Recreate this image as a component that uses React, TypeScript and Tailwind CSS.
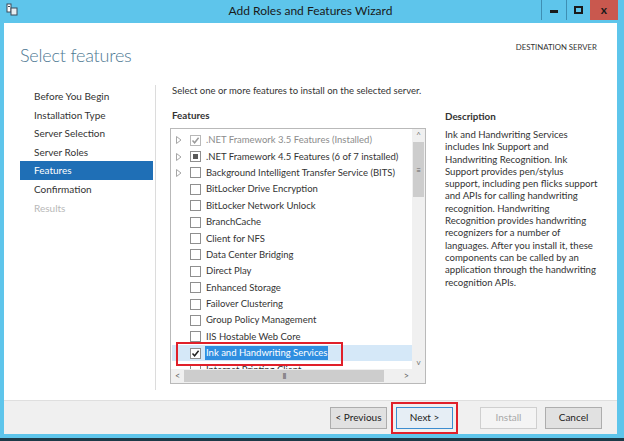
import React from 'react';

const navItems = [
  'Before You Begin',
  'Installation Type',
  'Server Selection',
  'Server Roles',
  'Features',
  'Confirmation',
  'Results',
];

type Row = { label: string; state: 'none' | 'checked' | 'partial' | 'installed'; expand?: boolean };

const rows: Row[] = [
  { label: '.NET Framework 3.5 Features (Installed)', state: 'installed', expand: true },
  { label: '.NET Framework 4.5 Features (6 of 7 installed)', state: 'partial', expand: true },
  { label: 'Background Intelligent Transfer Service (BITS)', state: 'none', expand: true },
  { label: 'BitLocker Drive Encryption', state: 'none' },
  { label: 'BitLocker Network Unlock', state: 'none' },
  { label: 'BranchCache', state: 'none' },
  { label: 'Client for NFS', state: 'none' },
  { label: 'Data Center Bridging', state: 'none' },
  { label: 'Direct Play', state: 'none' },
  { label: 'Enhanced Storage', state: 'none' },
  { label: 'Failover Clustering', state: 'none' },
  { label: 'Group Policy Management', state: 'none' },
  { label: 'IIS Hostable Web Core', state: 'none' },
  { label: 'Ink and Handwriting Services', state: 'checked' },
  { label: 'Internet Printing Client', state: 'none' },
];

function CheckBox({ state }: { state: Row['state'] }) {
  const border = state === 'installed' ? 'border-[#b8b8b8]' : 'border-[#8f8f8f]';
  return (
    <div className={`w-[11px] h-[11px] border ${border} bg-white flex items-center justify-center shrink-0`}>
      {state === 'partial' && <div className="w-[5px] h-[5px] bg-[#5a5a5a]" />}
      {(state === 'checked' || state === 'installed') && (
        <svg width="9" height="9" viewBox="0 0 9 9">
          <path d="M1.5 4.5 L3.6 6.8 L7.6 1.8" fill="none" stroke={state === 'installed' ? '#9a9a9a' : '#222'} strokeWidth="1.5" />
        </svg>
      )}
    </div>
  );
}

function Button({ label, disabled, focused }: { label: string; disabled?: boolean; focused?: boolean }) {
  return (
    <div
      className={`w-[57px] h-[22px] flex items-center justify-center text-[10px] border shrink-0 ${
        disabled
          ? 'border-[#cfcfcf] bg-[#f4f4f4] text-[#a8a8a8]'
          : focused
          ? 'border-[#3c8dd0] bg-[#e6eef5] text-[#222]'
          : 'border-[#adadad] bg-[#e1e1e1] text-[#222]'
      }`}
    >
      {label}
    </div>
  );
}

export default function App() {
  return (
    <div
      className="w-[624px] h-[441px] bg-[#5ec5eb] flex flex-col overflow-hidden text-[#333]"
      style={{ fontFamily: 'Lato, "Noto Sans", sans-serif' }}
    >
      {/* Title bar */}
      <div className="h-[23px] flex items-start relative shrink-0">
        <div className="pl-[6px] pt-[3px]">
          <svg width="12" height="13" viewBox="0 0 12 13">
            <rect x="1" y="1" width="4" height="8" fill="#fff" stroke="#3a4a5a" strokeWidth="1" />
            <rect x="5" y="5" width="6" height="7" fill="#e6eef2" stroke="#3a4a5a" strokeWidth="1" />
            <rect x="2" y="3" width="2" height="1" fill="#3a4a5a" />
          </svg>
        </div>
        <div className="flex-1 text-center text-[12px] leading-[22px] text-[#1a1a1a] pl-[62px]">
          Add Roles and Features Wizard
        </div>
        <div className="flex h-[20px] mr-[6px]">
          <div className="w-[25px] border-l border-[#3e8fb3] flex items-center justify-center">
            <div className="w-[8px] h-[3px] bg-[#1a1a1a] mt-[3px]" />
          </div>
          <div className="w-[24px] border-l border-[#3e8fb3] flex items-center justify-center">
            <div className="w-[9px] h-[8px] border-2 border-[#1a1a1a]" />
          </div>
          <div className="w-[28px] bg-[#c9584e] flex items-center justify-center text-[12px] font-bold text-[#1a1a1a]">
            x
          </div>
        </div>
      </div>

      {/* Window body */}
      <div className="ml-[4px] mr-[7px] flex-1 flex flex-col bg-white min-h-0">
        <div className="h-[377px] flex flex-col shrink-0">
          {/* Header */}
          <div className="h-[62px] flex justify-between shrink-0">
            <div className="pl-[16px] pt-[19px] text-[18px] font-light text-[#4d7892] leading-[26px] tracking-[-0.2px]">
              Select features
            </div>
            <div className="pr-[20px] pt-[19px] text-[7.8px] text-[#333]">DESTINATION SERVER</div>
          </div>

          <div className="flex flex-1 min-h-0">
            {/* Nav */}
            <div className="w-[152px] border-r border-[#dcdcdc] pl-[16px] pt-[2px] mb-[10px] shrink-0">
              {navItems.map((item) => (
                <div
                  key={item}
                  className={`h-[18.6px] pl-[14px] text-[10px] leading-[18.6px] w-[133px] ${
                    item === 'Features'
                      ? 'bg-[#1f6fb6] text-white'
                      : item === 'Results'
                      ? 'text-[#b8b8b8]'
                      : 'text-[#333]'
                  }`}
                >
                  {item}
                </div>
              ))}
            </div>

            {/* Main */}
            <div className="flex-1 pl-[14px] flex">
              <div className="w-[257px] shrink-0">
                <div className="pl-[2px] text-[9.5px] leading-[14px] mt-[-1px] whitespace-nowrap">
                  Select one or more features to install on the selected server.
                </div>
                <div className="pl-[2px] text-[9.8px] font-bold leading-[14px] mt-[10px]">Features</div>
                <div className="mt-[6px] w-[256px] h-[256px] border border-[#b9b9b9] relative flex flex-col">
                  <div className="flex flex-1 min-h-0">
                    <div className="flex-1 overflow-hidden pt-[3px] pl-[1px]">
                      {rows.map((r) => {
                        const sel = r.state === 'checked';
                        return (
                          <div
                            key={r.label}
                            className={`h-[16.4px] flex items-center text-[9.5px] whitespace-nowrap ${
                              sel ? 'bg-[#d5e8f8]' : ''
                            }`}
                          >
                            <div className="w-[18px] flex justify-start shrink-0 pl-[4px]">
                              {r.expand && (
                                <svg width="6" height="8" viewBox="0 0 6 8">
                                  <path d="M0.5 0.5 L5 4 L0.5 7.5 Z" fill="none" stroke="#a6a6a6" strokeWidth="1" />
                                </svg>
                              )}
                            </div>
                            <CheckBox state={r.state} />
                            <span
                              className={`ml-[4px] px-[1px] leading-[14px] ${
                                sel ? 'bg-[#2f8ee0] text-white' : r.state === 'installed' ? 'text-[#8c8c8c]' : 'text-[#333]'
                              }`}
                            >
                              {r.label}
                            </span>
                          </div>
                        );
                      })}
                    </div>
                    {/* vertical scrollbar */}
                    <div className="w-[13px] bg-[#f0f0f0] flex flex-col items-center shrink-0">
                      <div className="h-[13px] text-[8px] leading-[13px] text-[#777]">^</div>
                      <div className="w-[11px] h-[55px] bg-[#cdcdcd] flex items-center justify-center text-[8px] text-[#666]">
                        ≡
                      </div>
                      <div className="flex-1" />
                      <div className="h-[13px] text-[8px] leading-[13px] text-[#777]">v</div>
                    </div>
                  </div>
                  {/* horizontal scrollbar */}
                  <div className="h-[14px] flex bg-[#f0f0f0] shrink-0 items-center">
                    <div className="w-[13px] text-center text-[9px] text-[#666]">&lt;</div>
                    <div className="w-[200px] h-[12px] bg-[#cdcdcd] flex items-center justify-center text-[7px] text-[#666] tracking-[-1px]">
                      III
                    </div>
                    <div className="flex-1 text-right pr-[3px] text-[9px] text-[#666]">&gt;</div>
                    <div className="w-[13px] h-full bg-[#f0f0f0]" />
                  </div>
                  {/* red highlight */}
                  <div className="absolute left-[5px] top-[213px] w-[167px] h-[24px] border-2 border-[#e0202a]" />
                </div>
              </div>

              <div className="pl-[18px] pr-[4px] flex-1">
                <div className="text-[9.8px] font-bold leading-[14px] mt-[24px]">Description</div>
                <div className="mt-[6px] text-[9.6px] leading-[12.3px] text-[#333] whitespace-nowrap">
                  Ink and Handwriting Services
                  <br />
                  includes Ink Support and
                  <br />
                  Handwriting Recognition. Ink
                  <br />
                  Support provides pen/stylus
                  <br />
                  support, including pen flicks support
                  <br />
                  and APIs for calling handwriting
                  <br />
                  recognition. Handwriting
                  <br />
                  Recognition provides handwriting
                  <br />
                  recognizers for a number of
                  <br />
                  languages. After you install it, these
                  <br />
                  components can be called by an
                  <br />
                  application through the handwriting
                  <br />
                  recognition APIs.
                </div>
              </div>
            </div>
          </div>
        </div>

        {/* Footer */}
        <div className="flex-1 bg-[#f0f0f0] border-t border-[#dfdfdf] flex items-center justify-end pr-[15px]">
          <Button label="< Previous" />
          <div className="border-2 border-[#e0202a] p-[3px] ml-[4px] mr-[22px]">
            <Button label="Next >" focused />
          </div>
          <Button label="Install" disabled />
          <div className="ml-[8px]">
            <Button label="Cancel" />
          </div>
        </div>
      </div>
      <div className="h-[4px] shrink-0" />
      <div className="h-[3px] bg-[#1d3a48] shrink-0" />
    </div>
  );
}
